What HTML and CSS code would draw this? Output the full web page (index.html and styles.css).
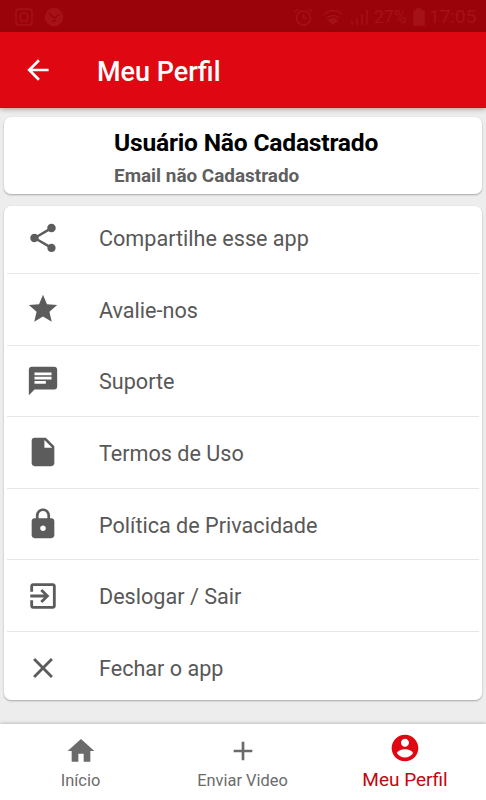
FILE: index.html
```html
<!DOCTYPE html>
<html lang="pt-BR">
<head>
<meta charset="utf-8">
<title>Meu Perfil</title>
<link rel="stylesheet" href="styles.css">
</head>
<body>
<div class="status">
  <svg class="s-app" viewBox="0 0 20 20"><rect x="2" y="2" width="16" height="16" rx="3"/><circle cx="10" cy="10" r="4"/><path d="M7 14v2M13 14v2"/></svg>
  <svg class="s-ball" viewBox="0 0 20 20"><circle class="solid" cx="10" cy="10" r="8.5"/><path class="cut" d="M5 6l5 5 6-4M8 15l4-2"/></svg>
  <span class="grow"></span>
  <svg class="s-alarm" viewBox="0 0 20 20"><circle cx="10" cy="11" r="7"/><path d="M10 7v4h3M1 5l4-3M19 5l-4-3"/></svg>
  <svg class="s-wifi" viewBox="0 0 20 16"><path d="M1 5q9-7 18 0M4 9q6-5 12 0"/><path class="solid" d="M6 11q4-3 8 0l-4 4z"/></svg>
  <svg class="s-signal" viewBox="0 0 20 18"><path d="M2 17v-4M7 17v-7M12 17V6M17 17V2"/></svg>
  <span class="pct">27%</span>
  <svg class="s-batt" viewBox="0 0 12 18"><path class="solid" d="M4 1h4v2h3v14H1V3h3z"/></svg>
  <span class="clock">17:05</span>
</div>
<header class="bar">
  <svg class="back" viewBox="0 0 24 24"><path d="M20 11H7.83l5.59-5.59L12 4l-8 8 8 8 1.41-1.41L7.83 13H20z"/></svg>
  <h1>Meu Perfil</h1>
</header>
<main>
  <section class="card user">
    <div class="name"><span>Usuário Não Cadastrado</span></div>
    <div class="mail"><span>Email não Cadastrado</span></div>
  </section>
  <section class="card menu">
    <div class="row"><svg viewBox="0 0 24 24"><path d="M18 16.08c-.76 0-1.44.3-1.96.77L8.91 12.7c.05-.23.09-.46.09-.7s-.04-.47-.09-.7l7.05-4.11c.54.5 1.25.81 2.04.81 1.66 0 3-1.34 3-3s-1.34-3-3-3-3 1.34-3 3c0 .24.04.47.09.7L8.04 9.81C7.5 9.31 6.79 9 6 9c-1.66 0-3 1.34-3 3s1.34 3 3 3c.79 0 1.5-.31 2.04-.81l7.12 4.16c-.05.21-.08.43-.08.65 0 1.61 1.31 2.92 2.92 2.92s2.92-1.31 2.92-2.92-1.31-2.92-2.92-2.92z"/></svg><span>Compartilhe esse app</span></div>
    <div class="row"><svg viewBox="0 0 24 24"><path d="M12 17.27L18.18 21l-1.64-7.03L22 9.24l-7.19-.61L12 2 9.19 8.63 2 9.24l5.46 4.73L5.82 21z"/></svg><span>Avalie-nos</span></div>
    <div class="row"><svg viewBox="0 0 24 24"><path d="M20 2H4c-1.1 0-1.99.9-1.99 2L2 22l4-4h14c1.1 0 2-.9 2-2V4c0-1.1-.9-2-2-2zM6 9h12v2H6V9zm8 5H6v-2h8v2zm4-6H6V6h12v2z"/></svg><span>Suporte</span></div>
    <div class="row"><svg viewBox="0 0 24 24"><path d="M6 2c-1.1 0-1.99.9-1.99 2L4 20c0 1.1.89 2 1.99 2H18c1.1 0 2-.9 2-2V8l-6-6H6zm7 7V3.5L18.5 9H13z"/></svg><span>Termos de Uso</span></div>
    <div class="row"><svg viewBox="0 0 24 24"><path d="M18 8h-1V6c0-2.76-2.24-5-5-5S7 3.24 7 6v2H6c-1.1 0-2 .9-2 2v10c0 1.1.9 2 2 2h12c1.1 0 2-.9 2-2V10c0-1.1-.9-2-2-2zm-6 9c-1.1 0-2-.9-2-2s.9-2 2-2 2 .9 2 2-.9 2-2 2zm3.1-9H8.9V6c0-1.71 1.39-3.1 3.1-3.1s3.1 1.39 3.1 3.1v2z"/></svg><span>Política de Privacidade</span></div>
    <div class="row"><svg viewBox="0 0 24 24"><path d="M10.09 15.59L11.5 17l5-5-5-5-1.41 1.41L12.67 11H3v2h9.67l-2.58 2.59zM19 3H5c-1.11 0-2 .9-2 2v4h2V5h14v14H5v-4H3v4c0 1.1.89 2 2 2h14c1.1 0 2-.9 2-2V5c0-1.1-.9-2-2-2z"/></svg><span>Deslogar / Sair</span></div>
    <div class="row"><svg viewBox="0 0 24 24"><path d="M19 6.41L17.59 5 12 10.59 6.41 5 5 6.41 10.59 12 5 17.59 6.41 19 12 13.41 17.59 19 19 17.59 13.41 12z"/></svg><span>Fechar o app</span></div>
  </section>
</main>
<nav>
  <div class="tab"><svg viewBox="0 0 24 24"><path d="M10 20v-6h4v6h5v-8h3L12 3 2 12h3v8z"/></svg><span>Início</span></div>
  <div class="tab"><svg viewBox="0 0 24 24"><path d="M19 13h-6v6h-2v-6H5v-2h6V5h2v6h6v2z"/></svg><span>Enviar Video</span></div>
  <div class="tab active"><svg viewBox="0 0 24 24"><path d="M12 2C6.48 2 2 6.48 2 12s4.48 10 10 10 10-4.48 10-10S17.52 2 12 2zm0 3c1.66 0 3 1.34 3 3s-1.34 3-3 3-3-1.34-3-3 1.34-3 3-3zm0 14.2c-2.5 0-4.71-1.28-6-3.22.03-1.99 4-3.08 6-3.08 1.99 0 5.97 1.09 6 3.08-1.29 1.94-3.5 3.22-6 3.22z"/></svg><span>Meu Perfil</span></div>
</nav>
</body>
</html>
```
FILE: styles.css
```css
* { box-sizing: border-box; }
body {
  margin: 0;
  width: 486px;
  height: 800px;
  overflow: hidden;
  display: flex;
  flex-direction: column;
  background: #ededed;
  font-family: Roboto, "Liberation Sans", sans-serif;
  color: #585858;
}
span { white-space: nowrap; }
.status {
  flex: none;
  height: 32px;
  display: flex;
  align-items: center;
  padding: 1px 9px 0 14px;
  background: #9b030a;
  color: #a41217;
  font-size: 19px;
}
.status svg { flex: none; fill: none; stroke: #a41217; stroke-width: 1.5; }
.status .solid { fill: #a41217; }
.status .cut { stroke: #9b030a; }
.grow { flex: 1; }
.s-app { width: 20px; height: 20px; margin-right: 10px; }
.s-ball { width: 20px; height: 20px; }
.s-alarm { width: 21px; height: 20px; margin-right: 9px; }
.s-wifi { width: 20px; height: 16px; margin-right: 7px; }
.s-signal { width: 20px; height: 18px; margin-right: 4px; }
.pct { width: 36px; font-size: 17.5px; }
.s-batt { width: 12px; height: 18px; margin: 0 4px 0 3px; }
.clock { width: 48px; }
.bar {
  flex: none;
  position: relative;
  height: 76px;
  display: flex;
  align-items: center;
  padding: 1px 0 0 22px;
  background: #df0711;
  border-bottom: 1px solid #bd1118;
  box-shadow: 0 1px 5px rgba(90, 0, 0, .4);
}
.back { width: 32px; height: 32px; fill: #fff; margin-right: 43px; }
h1 { margin: 4px 0 0; font-size: 27px; line-height: 32px; font-weight: 500; color: #fff; }
main { flex: 1; padding: 9px 4px 0; }
.card {
  background: #fff;
  border-radius: 7px;
  box-shadow: 0 1px 2px rgba(0, 0, 0, .3);
}
.user { height: 77px; padding: 11px 0 0 110px; }
.name { font-size: 24.6px; letter-spacing: -.2px; line-height: 30px; font-weight: 700; color: #000; }
.mail { margin-top: 7px; font-size: 18.9px; line-height: 22px; font-weight: 700; color: #5f5f5f; }
.menu { margin-top: 12px; height: 494px; padding: 0 3px; overflow: hidden; }
.row {
  height: 71.6px;
  display: flex;
  align-items: center;
  padding: 0 0 0 19px;
  border-bottom: 1px solid #e6e6e6;
  font-size: 21.6px;
}
.row:first-child { height: 68px; padding-bottom: 4px; }
.row:last-child { height: 69px; border: 0; padding-top: 4px; }
.row svg { width: 34px; height: 34px; fill: #5c5c5c; margin-right: 39px; }
.row span { padding-top: 2px; }
.row:last-child span { padding-top: 0; }
nav {
  flex: none;
  height: 76px;
  display: grid;
  grid-template-columns: repeat(3, 1fr);
  background: #fff;
  box-shadow: 0 -1px 3px rgba(0, 0, 0, .2);
}
.tab {
  display: flex;
  flex-direction: column;
  align-items: center;
  padding-top: 11px;
  font-size: 16.4px;
  line-height: 20px;
  color: #6b6b6b;
}
.tab svg { width: 32px; height: 32px; fill: currentColor; margin-bottom: 4px; }
.tab:nth-child(1) { padding-right: 1px; }
.tab:nth-child(2) { padding-right: 1px; }
.tab.active { padding-top: 8px; font-size: 19px; color: #c4060f; }
.tab.active svg { fill: #df0711; margin-bottom: 6px; }
```
